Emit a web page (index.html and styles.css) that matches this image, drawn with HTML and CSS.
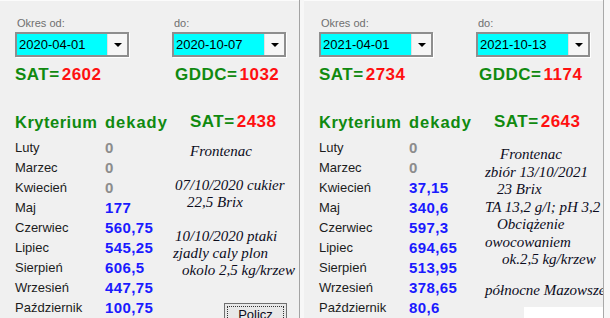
FILE: index.html
```html
<!DOCTYPE html>
<html>
<head>
  <meta charset="utf-8">
  <link rel="stylesheet" href="styles.css">
  <title>Kryterium dekady</title>
</head>
<body>

<div class="okno">

  <div class="panel">
    <div class="okres">
      <div class="pole">
        <div class="etykieta">Okres od:</div>
        <div class="picker"><span class="data">2020-04-01</span><span class="strzalka"><i></i></span></div>
      </div>
      <div class="pole">
        <div class="etykieta">do:</div>
        <div class="picker"><span class="data">2020-10-07</span><span class="strzalka"><i></i></span></div>
      </div>
    </div>

    <div class="sumy">
      <div class="suma">SAT=<span class="liczba">2602</span></div>
      <div class="suma gddc">GDDC=<span class="liczba">1032</span></div>
    </div>

    <div class="naglowek">
      <span class="kryt">Kryterium</span>
      <span class="dek">dekady</span>
      <span class="sat">SAT=<span class="liczba">2438</span></span>
    </div>

    <div class="dol">
      <div class="miesiace">
        <span class="mies">Luty</span><span class="wart zero">0</span>
        <span class="mies">Marzec</span><span class="wart zero">0</span>
        <span class="mies">Kwiecień</span><span class="wart zero">0</span>
        <span class="mies">Maj</span><span class="wart">177</span>
        <span class="mies">Czerwiec</span><span class="wart">560,75</span>
        <span class="mies">Lipiec</span><span class="wart">545,25</span>
        <span class="mies">Sierpień</span><span class="wart">606,5</span>
        <span class="mies">Wrzesień</span><span class="wart">447,75</span>
        <span class="mies">Październik</span><span class="wart">100,75</span>
      </div>

      <div class="uwagi">
        <div class="lin" style="padding-left: 18px">Frontenac</div>
        <div class="lin pusta"></div>
        <div class="lin" style="padding-left: 3px">07/10/2020 cukier</div>
        <div class="lin" style="padding-left: 15px">22,5 Brix</div>
        <div class="lin pusta"></div>
        <div class="lin" style="padding-left: 3px">10/10/2020 ptaki</div>
        <div class="lin" style="padding-left: 1px">zjadly caly plon</div>
        <div class="lin" style="padding-left: 10px">okolo 2,5 kg/krzew</div>
        <div class="przycisk"><span>Policz</span></div>
      </div>
    </div>
  </div>

  <div class="przerwa"></div>

  <div class="panel">
    <div class="okres">
      <div class="pole">
        <div class="etykieta">Okres od:</div>
        <div class="picker"><span class="data">2021-04-01</span><span class="strzalka"><i></i></span></div>
      </div>
      <div class="pole">
        <div class="etykieta">do:</div>
        <div class="picker"><span class="data">2021-10-13</span><span class="strzalka"><i></i></span></div>
      </div>
    </div>

    <div class="sumy">
      <div class="suma">SAT=<span class="liczba">2734</span></div>
      <div class="suma gddc">GDDC=<span class="liczba">1174</span></div>
    </div>

    <div class="naglowek">
      <span class="kryt">Kryterium</span>
      <span class="dek">dekady</span>
      <span class="sat">SAT=<span class="liczba">2643</span></span>
    </div>

    <div class="dol">
      <div class="miesiace">
        <span class="mies">Luty</span><span class="wart zero">0</span>
        <span class="mies">Marzec</span><span class="wart zero">0</span>
        <span class="mies">Kwiecień</span><span class="wart">37,15</span>
        <span class="mies">Maj</span><span class="wart">340,6</span>
        <span class="mies">Czerwiec</span><span class="wart">597,3</span>
        <span class="mies">Lipiec</span><span class="wart">694,65</span>
        <span class="mies">Sierpień</span><span class="wart">513,95</span>
        <span class="mies">Wrzesień</span><span class="wart">378,65</span>
        <span class="mies">Październik</span><span class="wart">80,6</span>
      </div>

      <div class="uwagi prawe">
        <div class="lin" style="padding-left: 15px">Frontenac</div>
        <div class="lin">zbiór 13/10/2021</div>
        <div class="lin" style="padding-left: 12px">23 Brix</div>
        <div class="lin">TA 13,2 g/l; pH 3,2</div>
        <div class="lin" style="padding-left: 12px">Obciążenie</div>
        <div class="lin">owocowaniem</div>
        <div class="lin" style="padding-left: 17px">ok.2,5 kg/krzew</div>
        <div class="lin ostatnia">północne Mazowsze</div>
        <div class="biale"></div>
      </div>
    </div>
  </div>

  <div class="brzeg"></div>

</div>

</body>
</html>
```

FILE: styles.css
```css
html, body {
  margin: 0;
  padding: 0;
  background-color: #f0f0f0;
  font-family: "Liberation Sans", Arial, sans-serif;
}

.okno {
  display: flex;
  height: 318px;
  overflow: hidden;
}

.panel {
  width: 299px;
  flex: none;
  padding-left: 15px;
  box-sizing: border-box;
  border-top: 1px solid #fbfbfb;
}

.przerwa {
  width: 5px;
  flex: none;
  border-left: 1px solid #a3a3a3;
  background-color: #f7f7f7;
  box-sizing: border-box;
}

.brzeg {
  flex: 1;
  border-left: 1px solid #a9a9a9;
  background-color: #f7f7f7;
}

/* okres od / do */

.okres {
  display: flex;
  gap: 43px;
  padding-top: 16px;
}

.etykieta {
  font-size: 11px;
  line-height: 13px;
  color: #6f6f6f;
  padding-left: 2px;
  height: 15px;
}

.picker {
  display: flex;
  width: 114px;
  height: 25px;
  box-sizing: border-box;
  border: 2px solid #8e8e8e;
  box-shadow: 1px 1px 0 #ffffff;
}

.data {
  flex: 1;
  background-color: #00ffff;
  font-size: 13px;
  line-height: 21px;
  padding-left: 2px;
  color: #000;
}

.strzalka {
  width: 19px;
  background-color: #f6f6f6;
  border-left: 1px solid #e0e0e0;
  display: flex;
  align-items: center;
  justify-content: center;
}

.strzalka i {
  width: 0;
  height: 0;
  border-left: 4px solid transparent;
  border-right: 4px solid transparent;
  border-top: 4px solid #000;
  margin-top: 1px;
}

/* SAT i GDDC */

.sumy {
  display: flex;
  padding-top: 8px;
}

.suma {
  flex: none;
  font-size: 17px;
  line-height: 20px;
  font-weight: bold;
  color: #108a10;
  letter-spacing: 0.5px;
  width: 160px;
}

.suma.gddc {
  width: auto;
}

.liczba {
  color: #ff1010;
  padding-left: 2px;
}

/* kryterium dekady */

.naglowek {
  display: flex;
  padding-top: 27px;
  font-size: 16.5px;
  line-height: 20px;
  font-weight: bold;
  color: #108a10;
  letter-spacing: 0.5px;
}

.kryt {
  width: 90px;
}

.dek {
  width: 85px;
  letter-spacing: 1px;
}

.sat {
  font-size: 17px;
}

.dol {
  display: flex;
  padding-top: 6px;
}

.miesiace {
  display: grid;
  grid-template-columns: 90px 67px;
  grid-auto-rows: 20px;
  width: 157px;
  flex: none;
}

.mies {
  font-size: 13px;
  line-height: 20px;
  color: #1c1c1c;
}

.wart {
  font-size: 15px;
  line-height: 20px;
  font-weight: bold;
  color: #1a1aff;
  letter-spacing: 0.4px;
}

.zero {
  color: #8c8c8c;
}

.uwagi {
  padding-top: 5px;
  font-family: "Liberation Serif", "Times New Roman", serif;
  font-style: italic;
  font-size: 15px;
  line-height: 17px;
  color: #0c0c1c;
  white-space: nowrap;
}

.uwagi.prawe {
  padding-top: 8px;
  padding-left: 9px;
  line-height: 17.5px;
}

.pusta {
  height: 17px;
}

.ostatnia {
  margin-top: 13px;
}

.przycisk {
  margin-top: 24px;
  margin-left: 52px;
  width: 63px;
  height: 24px;
  box-sizing: border-box;
  border: 1px solid #707070;
  background-color: #e8e8e8;
  padding: 2px;
  font-family: "Liberation Sans", Arial, sans-serif;
  font-style: normal;
  font-size: 13px;
}

.przycisk span {
  display: block;
  border: 1px dotted #333;
  text-align: center;
  line-height: 16px;
}

.biale {
  margin-top: 8px;
  margin-left: 39px;
  width: 80px;
  height: 12px;
  background-color: #ffffff;
}
```
